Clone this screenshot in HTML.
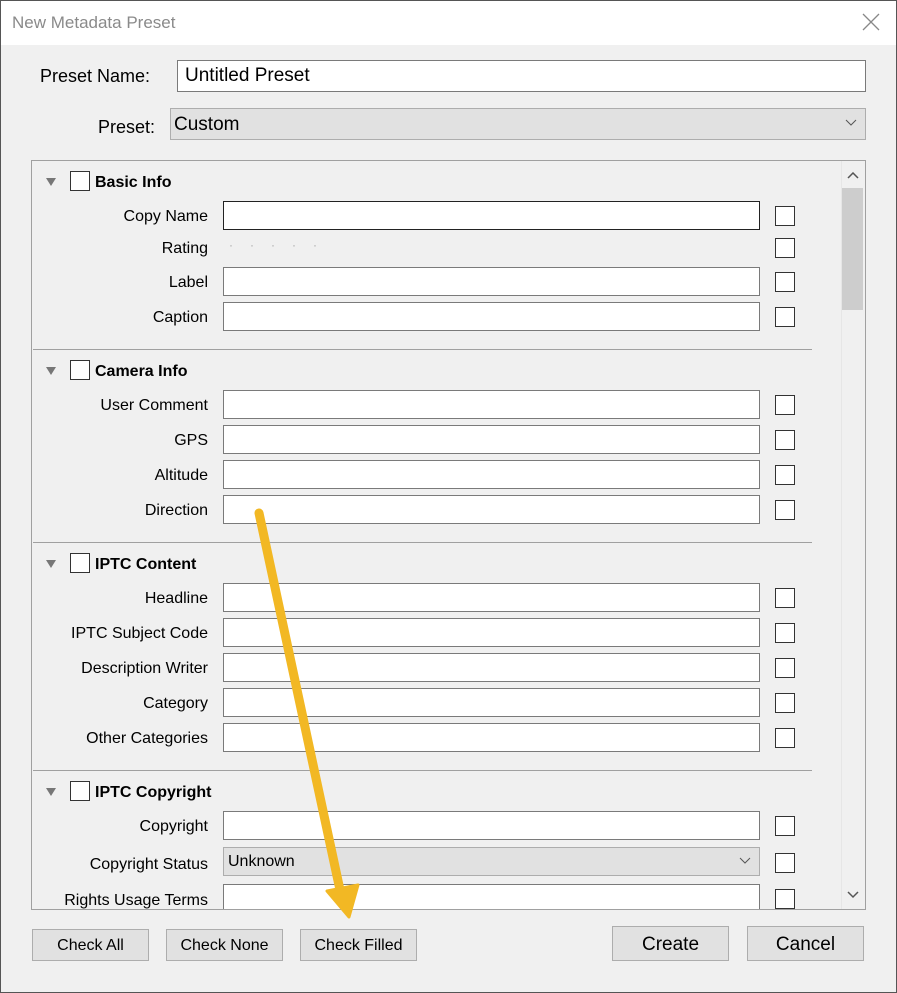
<!DOCTYPE html>
<html><head><meta charset="utf-8"><style>
*{box-sizing:border-box;margin:0;padding:0}
body{width:897px;height:993px;background:#f0f0f0;font-family:"Liberation Sans",sans-serif;position:relative;overflow:hidden;color:#000}
.a{position:absolute}
.win{left:0;top:0;width:897px;height:993px;border:1px solid #555}
.title{left:1px;top:1px;width:895px;height:44px;background:#fff}
.lbl{position:absolute;text-align:right;font-size:16px;width:200px;left:8px;transform:translateY(2px)}
.f{position:absolute;left:223px;width:537px;height:29px;background:#fff;border:1px solid #7a7a7a}
.cb{position:absolute;left:775px;width:20px;height:20px;border:1px solid #333;background:#fff}
.hcb{position:absolute;left:70px;width:20px;height:20px;border:1px solid #333;background:#fff}
.tri{position:absolute;left:46px;width:0;height:0;border-left:5px solid transparent;border-right:5px solid transparent;border-top:8px solid #777}
.h{position:absolute;left:95px;font-size:16px;font-weight:bold;transform:translateY(1px)}
.sep{position:absolute;left:33px;width:779px;height:1px;background:#a0a0a0}
.btn{position:absolute;background:#e1e1e1;border:1px solid #adadad;font-size:16px;text-align:center}
</style></head><body>
<div class="a title"></div>
<div class="a" style="left:12px;top:13px;font-size:17px;color:#8a8a8a">New Metadata Preset</div>
<svg class="a" style="left:862px;top:13px" width="18" height="18"><path d="M1 1L17 17M17 1L1 17" stroke="#888" stroke-width="1.3"/></svg>

<div class="a" style="left:40px;top:66px;font-size:18px">Preset Name:</div>
<div class="a" style="left:177px;top:60px;width:689px;height:32px;background:#fff;border:1px solid #7a7a7a;font-size:19px;padding:4px 0 0 7px">Untitled Preset</div>
<div class="a" style="left:98px;top:117px;font-size:18px">Preset:</div>
<div class="a" style="left:170px;top:108px;width:696px;height:32px;background:#e1e1e1;border:1px solid #adadad;font-size:19px;padding:5px 0 0 3px">Custom</div>
<svg class="a" style="left:845px;top:119px" width="12" height="8"><path d="M1 1L6 6L11 1" stroke="#555" fill="none"/></svg>

<div class="a" style="left:31px;top:160px;width:835px;height:750px;border:1px solid #a0a0a0;overflow:hidden">
</div>
<div class="a" style="left:841px;top:161px;width:24px;height:748px;background:#f0f0f0;border-left:1px solid #e6e6e6"></div>
<div class="a" style="left:842px;top:188px;width:21px;height:122px;background:#cdcdcd"></div>
<svg class="a" style="left:847px;top:172px" width="12" height="8"><path d="M1 6L6 1L11 6" stroke="#555" stroke-width="1.5" fill="none"/></svg>
<svg class="a" style="left:847px;top:891px" width="12" height="8"><path d="M1 1L6 6L11 1" stroke="#555" stroke-width="1.5" fill="none"/></svg>

<div style="position:absolute;left:0;top:0;width:841px;height:909px;overflow:hidden">
<div class="tri" style="top:178px"></div><div class="hcb" style="top:171px"></div><div class="h" style="top:173px">Basic Info</div>
<div class="lbl" style="top:206px">Copy Name</div><div class="f" style="top:201px;border-color:#222"></div><div class="cb" style="top:206px"></div>
<div class="lbl" style="top:238px">Rating</div><div class="a" style="left:229px;top:238px;color:#aaa;font-size:12px;letter-spacing:17px">·····</div><div class="cb" style="top:238px"></div>
<div class="lbl" style="top:272px">Label</div><div class="f" style="top:267px"></div><div class="cb" style="top:272px"></div>
<div class="lbl" style="top:307px">Caption</div><div class="f" style="top:302px"></div><div class="cb" style="top:307px"></div>
<div class="sep" style="top:349px"></div>
<div class="tri" style="top:367px"></div><div class="hcb" style="top:360px"></div><div class="h" style="top:362px">Camera Info</div>
<div class="lbl" style="top:395px">User Comment</div><div class="f" style="top:390px"></div><div class="cb" style="top:395px"></div>
<div class="lbl" style="top:430px">GPS</div><div class="f" style="top:425px"></div><div class="cb" style="top:430px"></div>
<div class="lbl" style="top:465px">Altitude</div><div class="f" style="top:460px"></div><div class="cb" style="top:465px"></div>
<div class="lbl" style="top:500px">Direction</div><div class="f" style="top:495px"></div><div class="cb" style="top:500px"></div>
<div class="sep" style="top:542px"></div>
<div class="tri" style="top:560px"></div><div class="hcb" style="top:553px"></div><div class="h" style="top:555px">IPTC Content</div>
<div class="lbl" style="top:588px">Headline</div><div class="f" style="top:583px"></div><div class="cb" style="top:588px"></div>
<div class="lbl" style="top:623px">IPTC Subject Code</div><div class="f" style="top:618px"></div><div class="cb" style="top:623px"></div>
<div class="lbl" style="top:658px">Description Writer</div><div class="f" style="top:653px"></div><div class="cb" style="top:658px"></div>
<div class="lbl" style="top:693px">Category</div><div class="f" style="top:688px"></div><div class="cb" style="top:693px"></div>
<div class="lbl" style="top:728px">Other Categories</div><div class="f" style="top:723px"></div><div class="cb" style="top:728px"></div>
<div class="sep" style="top:770px"></div>
<div class="tri" style="top:788px"></div><div class="hcb" style="top:781px"></div><div class="h" style="top:783px">IPTC Copyright</div>
<div class="lbl" style="top:816px">Copyright</div><div class="f" style="top:811px"></div><div class="cb" style="top:816px"></div>
<div class="lbl" style="top:854px">Copyright Status</div><div class="f" style="top:847px;background:#e1e1e1;border-color:#adadad;font-size:16px;padding:5px 0 0 4px">Unknown</div><svg class="a" style="left:739px;top:857px" width="12" height="8"><path d="M1 1L6 6L11 1" stroke="#555" fill="none"/></svg><div class="cb" style="top:853px"></div>
<div class="lbl" style="top:890px">Rights Usage Terms</div><div class="f" style="top:884px"></div><div class="cb" style="top:889px"></div>
</div>

<div class="btn" style="left:32px;top:929px;width:117px;height:32px;padding-top:7px">Check All</div>
<div class="btn" style="left:166px;top:929px;width:117px;height:32px;padding-top:7px">Check None</div>
<div class="btn" style="left:300px;top:929px;width:117px;height:32px;padding-top:7px">Check Filled</div>
<div class="btn" style="left:612px;top:926px;width:117px;height:35px;padding-top:7px;font-size:19px">Create</div>
<div class="btn" style="left:747px;top:926px;width:117px;height:35px;padding-top:7px;font-size:19px">Cancel</div>

<svg class="a" style="left:0;top:0" width="897" height="993">
<line x1="259" y1="513" x2="340" y2="890" stroke="#f2b824" stroke-width="9" stroke-linecap="round"/>
<polygon points="327,891 358,885 349,917" fill="#f2b824" stroke="#f2b824" stroke-width="3" stroke-linejoin="round"/>
</svg>
<div class="a win"></div>
</body></html>
